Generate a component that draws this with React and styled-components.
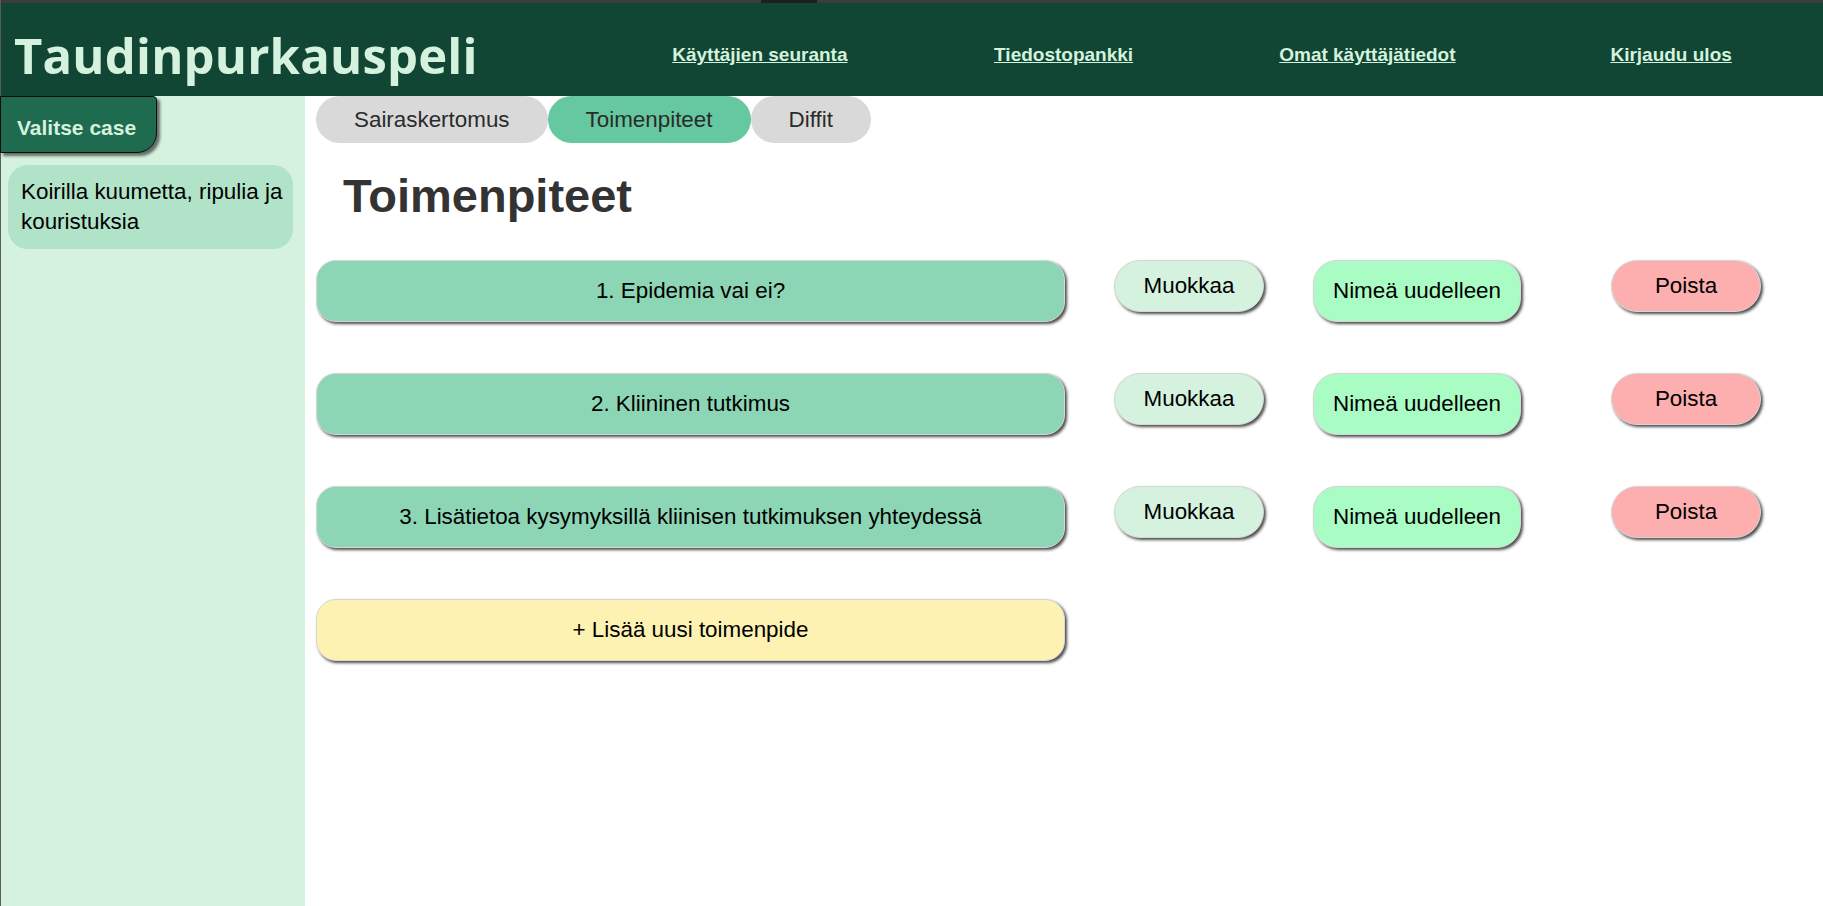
import React from "react";
import styled, { createGlobalStyle } from "styled-components";

const GlobalStyle = createGlobalStyle`
  html, body { margin: 0; padding: 0; background: #ffffff; }
  body { font-family: "Liberation Sans", Arial, sans-serif; }
  * { box-sizing: border-box; }
`;

const Page = styled.div`
  min-height: 906px;
  display: flex;
  flex-direction: column;
  border-left: 1px solid #5a5a5a;
`;

const ChromeStrip = styled.div`
  height: 3px;
  background: #3d3d3d;
  display: flex;
`;

const ChromeTab = styled.div`
  margin-left: 760px;
  width: 56px;
  background: #1f1f1f;
`;

const Header = styled.header`
  height: 93px;
  padding-top: 11px;
  background: #114634;
  display: grid;
  grid-template-columns: 607px 1fr;
  align-items: center;
`;

const Title = styled.h1`
  margin: 0 0 0 13px;
  font-family: "Open Sans", "Noto Sans", sans-serif;
  font-weight: 700;
  font-size: 49px;
  letter-spacing: 0.2px;
  color: #d4f2dd;
  line-height: 1;
`;

const Nav = styled.nav`
  display: flex;
  align-items: center;
`;

const NavLink = styled.a`
  flex: 1;
  text-align: center;
  font-weight: 700;
  font-size: 19px;
  color: #d4f2dd;
  text-decoration: underline;
  cursor: pointer;
`;

const Body = styled.div`
  flex: 1;
  display: flex;
`;

const Sidebar = styled.aside`
  width: 304px;
  background: #d4f2dd;
  display: flex;
  flex-direction: column;
  align-items: flex-start;
`;

const CaseButton = styled.button`
  width: 157px;
  height: 57px;
  margin-left: -1px;
  background: #1f6b50;
  color: #d4f2dd;
  font-family: "Liberation Sans", Arial, sans-serif;
  font-weight: 700;
  font-size: 21px;
  text-align: left;
  padding: 7px 0 0 16px;
  border: 1px solid #0d0d0d;
  border-radius: 0 4px 20px 0;
  box-shadow: 3px 3px 3px rgba(0, 0, 0, 0.55);
  cursor: pointer;
`;

const CaseItem = styled.div`
  margin: 12px 0 0 7px;
  width: 285px;
  background: #b1e3c9;
  border-radius: 20px;
  padding: 12px 10px 12px 13px;
  font-size: 22.4px;
  line-height: 30px;
  color: #000;
`;

const Main = styled.main`
  flex: 1;
  padding-left: 11px;
`;

const Tabs = styled.div`
  display: flex;
`;

const Tab = styled.button`
  height: 47px;
  padding: 0 38px;
  border: none;
  border-radius: 24px;
  background: ${(p) => (p.$active ? "#65c8a0" : "#d9d9d9")};
  color: #2b2b2b;
  font-family: "Liberation Sans", Arial, sans-serif;
  font-size: 22.4px;
  cursor: pointer;
`;

const Heading = styled.h2`
  margin: 26px 0 0 27px;
  font-size: 47px;
  font-weight: 700;
  color: #333333;
  line-height: 54px;
`;

const List = styled.div`
  margin-top: 37px;
  display: flex;
  flex-direction: column;
  gap: 51px;
`;

const Row = styled.div`
  display: grid;
  grid-template-columns: 749px 150px 249px 150px;
  column-gap: 49px;
  align-items: start;
`;

const Pill = styled.button`
  border: 1px solid #d6d6d6;
  box-shadow: 2px 2px 3px rgba(0, 0, 0, 0.7);
  color: #000;
  font-family: "Liberation Sans", Arial, sans-serif;
  font-size: 22.4px;
  line-height: 26px;
  cursor: pointer;
`;

const ActionBar = styled(Pill)`
  width: 749px;
  height: 62px;
  border-radius: 20px;
  background: ${(p) => p.$bg};
`;

const SmallButton = styled(Pill)`
  height: 52px;
  border-radius: 26px;
  background: ${(p) => p.$bg};
  width: ${(p) => p.$w}px;
  padding: 0;
`;

const TallButton = styled(Pill)`
  height: 62px;
  border-radius: 24px;
  background: #a8fcc4;
  width: 208px;
  padding: 0;
`;

const items = [
  "1. Epidemia vai ei?",
  "2. Kliininen tutkimus",
  "3. Lisätietoa kysymyksillä kliinisen tutkimuksen yhteydessä",
];

export default function App() {
  return (
    <>
      <GlobalStyle />
      <Page>
        <ChromeStrip>
          <ChromeTab />
        </ChromeStrip>
        <Header>
          <Title>Taudinpurkauspeli</Title>
          <Nav>
            <NavLink>Käyttäjien seuranta</NavLink>
            <NavLink>Tiedostopankki</NavLink>
            <NavLink>Omat käyttäjätiedot</NavLink>
            <NavLink>Kirjaudu ulos</NavLink>
          </Nav>
        </Header>
        <Body>
          <Sidebar>
            <CaseButton>Valitse case</CaseButton>
            <CaseItem>Koirilla kuumetta, ripulia ja kouristuksia</CaseItem>
          </Sidebar>
          <Main>
            <Tabs>
              <Tab>Sairaskertomus</Tab>
              <Tab $active>Toimenpiteet</Tab>
              <Tab>Diffit</Tab>
            </Tabs>
            <Heading>Toimenpiteet</Heading>
            <List>
              {items.map((t) => (
                <Row key={t}>
                  <ActionBar $bg="#8cd5b5">{t}</ActionBar>
                  <SmallButton $bg="#d4f2dd" $w={150}>Muokkaa</SmallButton>
                  <TallButton>Nimeä uudelleen</TallButton>
                  <SmallButton $bg="#fdaeae" $w={150}>Poista</SmallButton>
                </Row>
              ))}
              <Row>
                <ActionBar $bg="#fdf2b2">+ Lisää uusi toimenpide</ActionBar>
              </Row>
            </List>
          </Main>
        </Body>
      </Page>
    </>
  );
}
